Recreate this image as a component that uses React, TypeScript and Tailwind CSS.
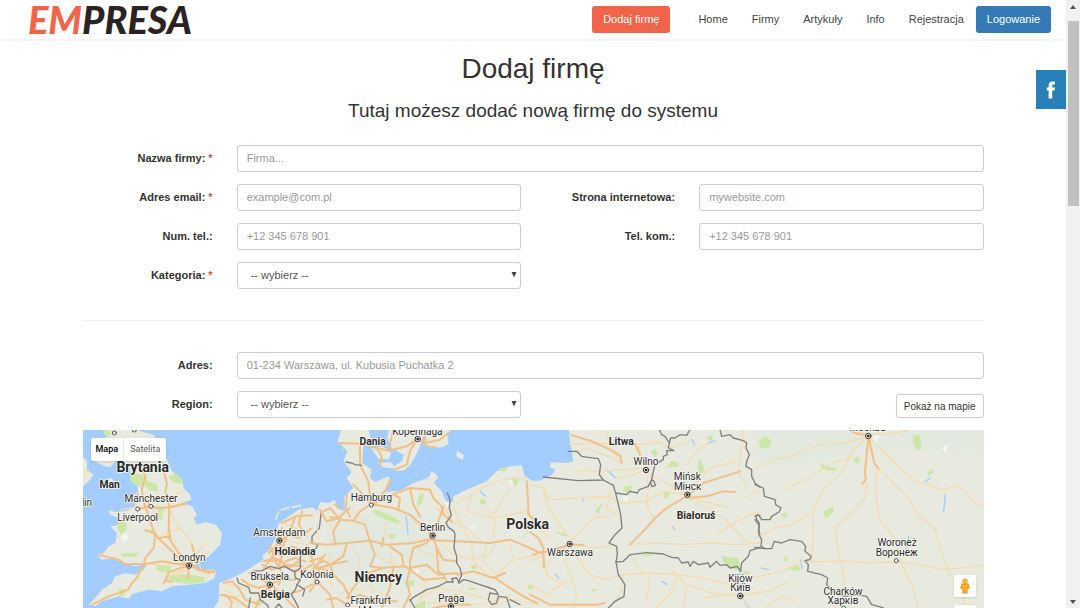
import type { ReactNode } from "react";

const navLinks = ["Home", "Firmy", "Artykuły", "Info", "Rejestracja"];

type Region = {
  shift: string;
  forests: string[];
  minor: string[];
  major: string[];
  borders: string[];
};

const regions: Region[] = [
  // British Isles and the Low Countries
  {
    shift: "translate(0 0)",
    forests: [
      "M145 135L180 140 190 155 225 170 228 190 205 188 185 172 160 172 145 158Z",
      "M258 145L285 137 302 155 300 168 272 162Z",
      "M228 235L243 238 240 275 226 272Z",
      "M108 278L135 285 132 308 118 320 105 300Z",
      "M115 376L168 374 166 385 125 388Z",
      "M108 484L130 482 130 500 112 506Z",
      "M222 410L268 415 262 436 225 428Z",
      "M250 442L320 438 368 448 366 462 320 468 262 458Z",
      "M190 305L212 306 210 312 190 311Z",
      "M62 5L88 8 84 24 66 20Z",
      "M520 517L545 515 545 528 523 530Z",
    ],
    minor: [
      "M0 125L22 130M5 150L20 135",
      "M170 190L155 205 165 240M150 240L115 245",
      "M205 235L225 262 260 235M260 240L290 300 315 322 330 350",
      "M312 320L330 345 340 405M260 290L255 330 290 345",
      "M240 320L300 300M320 410L280 440 300 455M260 400L300 410 350 390 385 370",
      "M190 405L245 412 300 405M240 470L270 440 320 425",
      "M360 430L340 380 375 340",
      "M255 215L300 190",
      "M420 480L450 500 470 530M430 470L480 480 520 500M430 530L465 505",
      "M540 400L600 400M560 370L590 385 620 380M600 400L640 420",
      "M610 290L640 300 680 330M605 330L640 345 680 350",
    ],
    major: [
      "M178 110L190 150 180 180 180 215M240 115L255 165 250 190 262 235 260 300 265 330",
      "M165 243L205 235 225 240 262 238 310 228",
      "M180 205L200 265 215 310 228 330 265 325",
      "M190 306L220 318 215 360 190 390 185 410",
      "M228 330L260 360 285 385 318 410",
      "M50 380L110 395 130 408 190 408 240 400 270 405 318 412",
      "M260 330L290 375 320 395 345 425 395 432",
      "M318 412L262 432 245 465M318 412L320 450M270 462L250 458",
      "M185 408L165 450 150 465 138 485M140 485L80 505 30 530",
      "M330 350L335 370 340 395 318 412M318 412L380 435 398 428",
      "M270 238L300 228M205 235L200 225",
      "M425 465L450 460 470 480 490 515 530 530M445 540L450 520 430 500",
      "M415 500L460 510 500 540M480 455L500 470 530 480 560 470",
      "M545 400L575 390 600 400 620 420M560 375L585 350 590 340M592 338L600 380 590 420",
      "M592 340L620 320 650 330 690 300M600 300L595 330M600 285L640 265 690 262",
      "M640 265L620 320M660 250L650 290 670 320M600 375L650 370 690 385",
      "M540 410L570 425 610 410 660 415M500 435L540 440 565 468 600 455 640 455",
      "M565 468L540 500 520 540M565 468L600 500 640 540M600 500L650 490 690 470",
      "M560 350L575 375 565 400M580 400L605 440 590 470M620 420L650 400",
      "M570 385L600 365 630 355 660 365M610 400L640 390 670 400M630 430L665 425 690 410",
      "M580 365L605 350 615 325M545 420L560 400 590 395 605 405M525 450L550 460 565 490",
    ],
    borders: [
      "M465 450L470 465 500 478 505 495 530 495 535 515 555 530",
      "M510 430L540 428 565 415 590 422 608 415 625 425 638 430 640 450 655 455 645 470 640 485 628 500 640 520 650 540",
      "M718 250L712 300 690 325 690 345 708 350 702 362 675 372 655 385 655 420 640 430M645 470L668 485 662 505",
      "M505 510L500 540M555 530L560 540M580 540L590 528 600 540",
    ],
  },
  // Denmark and Germany
  {
    shift: "translate(684 0)",
    forests: [
      "M185 248L205 247 250 268 270 280 265 288 230 275 200 262Z",
      "M232 320L255 318 255 332 240 333Z",
      "M332 195L342 200 335 228 320 235 325 210Z",
      "M510 212L528 216 525 230 510 226Z",
      "M605 148L622 150 625 168 612 175Z",
      "M565 122L590 118 590 128 568 130Z",
      "M282 460L310 455 312 472 290 478Z",
      "M650 470L668 472 668 485 655 482Z",
      "M480 410L500 412 500 422 488 424Z",
      "M315 530L345 515 345 540 318 540Z",
      "M475 478L500 480 496 486 478 486Z",
      "M95 50L105 58 100 70Z",
    ],
    minor: [
      "M440 225L485 200 520 175 575 155 650 150M430 240L460 300 485 345 490 400 540 450",
      "M485 200L470 250 555 270 550 335M555 270L650 250 690 290",
      "M650 240L670 280 640 330M520 240L550 260 600 180",
      "M420 280L470 300 520 345M405 240L430 285M440 380L480 395 540 380 560 340",
      "M560 440L600 400 680 380M610 400L600 350M530 345L520 400 560 440",
      "M320 520L380 480 450 490 520 510M350 525L520 530 600 500M460 470L440 520",
      "M200 380L230 400 260 410M260 240L300 260 330 300M230 280L220 340",
      "M130 360L150 400 140 430M60 380L50 430 70 480M200 430L180 480 220 500",
      "M380 240L400 260 430 250M540 540L600 515 690 530",
      "M320 350L340 375 380 385M240 380L250 420M400 350L430 380",
      "M130 250L160 280M60 280L70 320M20 290L25 330M90 500L120 480 160 490",
      "M340 450L350 480 330 510M150 440L200 450 240 430",
    ],
    major: [
      "M90 45L160 48 200 60 235 68 290 55 320 35M150 50L150 110 175 160 183 228",
      "M235 68L250 5M320 35L345 45 390 35 415 15M320 35L300 70 290 110 255 125M340 5L350 55 375 58",
      "M200 60L215 85 210 110",
      "M130 170L150 190 183 228M240 155L225 190 183 228M183 230L230 208 260 195 300 180 360 185 370 210 395 235 400 260",
      "M183 228L150 250 130 278 90 275 60 240 40 250M183 228L250 240 300 260 345 300 368 322",
      "M300 180L310 230 330 265M250 200L270 210 265 245",
      "M130 278L165 290 175 325 180 340M90 275L70 310 75 345M30 245L50 280 90 270M120 240L85 270 60 268",
      "M400 235L385 280 370 320M400 260L425 280M368 322L350 345 310 360 300 400 300 420",
      "M0 345L50 350 110 345 180 338 230 350 310 345 350 335 440 340 540 345 600 335 660 360 690 375",
      "M370 325L380 360 400 395 440 400M380 360L385 430 400 440M180 340L195 380 180 415 215 420 285 415 300 425",
      "M110 350L100 385 60 410 25 420M0 400L30 390 60 410 110 400M60 410L70 440 100 470 120 510",
      "M300 420L350 410 385 440 440 435M300 425L290 460 300 500 280 540M300 425L340 455 400 450",
      "M440 440L490 430 550 450 585 435M555 450L600 480 640 505 680 525",
      "M0 430L20 460 60 500 70 540M20 460L0 490M60 445L30 440 20 410 40 400M110 510L130 480 160 440 220 420",
      "M110 530L80 510 50 515M115 510L150 500 200 520 260 520M250 420L240 480 215 540M400 440L410 460",
      "M650 160L655 230 655 260 690 290M420 510L440 500 425 530 370 540M425 530L480 530",
      "M215 355L220 330M240 355L275 380 280 410M10 420L50 425M25 405L45 380M15 415L5 390",
      "M110 200L108 240 120 265M90 240L75 230",
    ],
    borders: [
      "M108 102L125 105 135 110 155 112",
      "M412 195L420 215 418 240 424 262 408 285 415 298 432 310 435 320 432 360 440 385 440 405 450 420 455 440 445 465",
      "M300 518L310 508 350 485 385 475 410 462 430 462 425 452 440 450 448 465 460 455 475 458 510 470 540 480 555 485 565 500 540 495 535 515 545 530 560 525 565 505 590 508 600 540",
      "M300 515L315 540M600 515L630 530",
    ],
  },
  // Poland, Lithuania and Belarus
  {
    shift: "translate(1344 0)",
    forests: [
      "M362 70L375 62 385 75 375 88Z",
      "M425 98L445 105 445 116 408 118Z",
      "M508 90L520 115 522 130 510 145 503 120Z",
      "M280 178L305 172 305 195 283 190Z",
      "M400 190L424 190 412 212 402 210Z",
      "M200 240L225 222 208 245 212 258 196 252Z",
      "M575 385L625 390 635 430 600 420 578 400Z",
      "M640 428L658 432 655 442 638 438Z",
      "M330 380L365 376 368 384 335 384Z",
      "M75 312L95 314 120 325 100 325Z",
      "M525 30L540 25 550 15 545 40Z",
      "M180 482L205 485 190 492Z",
    ],
    minor: [
      "M120 50L200 45 290 50 390 45M130 75L170 60 270 100M230 10L240 60 270 75",
      "M130 128L210 130 345 120M345 125L300 145 260 150M325 55L335 90 345 125 370 145 430 175 470 200",
      "M0 170L40 180 60 215 150 210 230 205 270 225M40 180L55 240 110 320M240 190L230 240 270 270",
      "M118 345L150 310 190 270 240 265M118 350L80 380 50 410 30 420M118 350L150 400 180 440 230 455 280 440",
      "M118 350L105 400 125 450 140 500 130 540M120 350L200 360 255 350M50 410L50 440 100 470",
      "M280 440L360 435 440 440 520 450 600 470M300 350L380 345 460 350 540 345 620 350 690 345",
      "M350 130L355 180 350 230 380 290M270 225L345 220 400 190 470 200M470 205L520 235 580 270 640 330",
      "M470 200L520 220 600 240M440 440L430 490 380 540M360 440L350 520M300 380L340 440",
      "M470 195L540 120 620 100M470 110L500 70 540 40M640 330L660 345M640 5L630 90 625 130 650 180",
      "M430 430L470 470 560 500 630 500M470 470L460 540M280 440L270 500 240 540M0 470L50 500 110 460",
      "M520 510L600 500 630 505 690 490M630 505L660 540M60 330L0 280M0 400L40 380",
      "M690 250L620 280 560 320M640 210L690 190M370 35L420 60 480 40",
    ],
    major: [
      "M125 22L180 38 240 65 272 85 275 105M315 48L330 80",
      "M300 350L345 305 375 270 410 240 470 205 520 165 630 130M470 210L530 205 580 190 615 192",
      "M0 312L25 330 40 360 42 420M35 375L70 365 118 350M40 370L10 380M0 500L30 515 60 530 200 530 225 525",
      "M130 350L160 350",
    ],
    borders: [
      "M40 147L145 158 220 156 250 172M115 70L140 70 155 85 175 88 205 92 212 110 208 140 220 156",
      "M250 172L258 200 272 260 276 300 255 320 237 345 260 355 262 380 258 402",
      "M258 195L290 200 300 190 322 195 328 185 355 175 365 155 372 160 376 172 366 176 362 165 375 110 400 95 400 85 412 80 410 68 432 68 415 60 418 45 405 25 395 20 388 5",
      "M418 45L422 30 435 30 450 20 470 22 480 5",
      "M570 5L575 25 600 20 610 30 640 38 650 45 648 60 658 80 650 100 648 115 665 125 665 145 675 165 690 178",
      "M258 402L280 400 300 380 350 374 400 378 425 388 445 390 455 405 475 402 480 415 490 400 505 410 535 405 540 418 560 400 570 412 590 410 600 420 622 415 632 430 635 405 655 385 660 368 690 358",
      "M258 402L265 440 285 470 282 505 255 520 235 540M690 262L678 262 680 275 688 285 685 310 690 318",
    ],
  },
  // Western Russia and eastern Ukraine
  {
    shift: "translate(2019 -120)",
    forests: [
      "M10 160L30 143 50 158 42 182 15 178Z",
      "M475 142L495 142 500 180 485 188 475 165Z",
      "M195 222L210 235 245 240 240 250 200 242Z",
      "M295 210L314 208 312 226 298 224Z",
      "M205 372L235 355 235 370 220 388 208 388Z",
      "M78 378L94 374 96 388 82 388Z",
      "M518 255L530 242 536 255 520 265Z",
      "M85 512L98 500 95 520 86 520Z",
      "M95 543L130 532 138 550 115 545Z",
    ],
    minor: [
      "M340 145L270 165 195 170 120 200 60 215 0 242M340 148L290 190 265 250 200 310 175 370 172 520",
      "M340 145L380 185 430 235 480 280 520 290 560 305 610 292 640 320 660 345 690 358",
      "M368 240L410 280 460 330 490 380 540 425 560 490 580 550 610 600 640 660",
      "M368 240L360 300 375 400 420 450 440 530 470 590 490 660M335 290L330 330 295 370 240 420 250 490 258 520",
      "M165 522L258 518 340 525 425 522 490 530 560 545 690 532M258 520L270 590 240 660",
      "M80 312L160 270 230 225 290 210M0 450L60 420 110 410 165 375M0 568L80 550 160 512",
      "M340 140L400 138 470 126M340 142L300 130 280 126M0 620L50 605 100 580M30 660L80 625 120 640",
    ],
    major: [
      "M340 155L335 200 330 250 332 275 322 288M343 155L350 190 358 225 370 242M335 140L310 138 285 128",
    ],
    borders: [
      "M0 290L25 300 28 325 60 335 62 350 78 360 72 372 50 385 45 395 20 395 10 380 0 385",
      "M0 395L12 412 12 440 20 455 18 475 30 482 50 482 58 460 80 465 105 455 140 460 152 475 150 490 168 505 165 515 150 518 160 530 158 550 200 560 218 570 215 590 225 600 235 615 270 625 300 620 335 625 350 650 370 655 385 660",
      "M0 478L30 482",
    ],
  },
];

const continent =
  "M390 546L410 520 412 465 450 450 490 430 520 410 545 395 540 385 562 365 570 350 585 320 588 290 605 275 650 245 690 238 706 248 714 222 740 225 759 215 764 240 789 250 787 205 814 180 794 150 809 132 784 100 796 70 767 40 779 0 859 0 866 30 844 55 841 105 869 125 864 150 880 162 919 145 926 160 909 192 954 188 994 165 1029 152 1054 162 1079 190 1092 222 1112 222 1114 205 1154 185 1214 160 1244 130 1284 115 1319 112 1326 140 1349 158 1374 158 1410 140 1420 125 1404 118 1406 103 1454 105 1474 100 1466 55 1460 0 2730 0 2730 1400 390 1400Z";

const britain =
  "M60 0L75 25 45 45 50 75 30 95 60 112 85 118 100 100 140 110 150 150 165 168 180 185 185 200 150 205 160 235 135 248 100 252 80 245 85 260 110 270 115 290 85 295 105 315 100 345 80 355 65 375 45 380 60 395 90 390 110 400 160 415 195 408 185 425 160 440 130 435 100 445 90 465 60 485 40 510 20 530 40 534 60 520 110 505 140 512 150 498 200 485 240 490 270 475 320 470 370 465 398 450 402 425 345 425 330 415 360 400 385 380 415 350 420 315 402 290 370 282 345 290 335 272 345 260 330 235 300 225 328 215 325 200 305 180 300 155 270 130 255 95 235 60 215 20 170 8 190 0Z";

const islands = [
  "M0 85L15 100 15 125 35 140 20 160 0 178Z",
  "M72 158L88 150 95 158 80 168Z",
  "M922 0L916 30 930 62 965 80 960 100 942 110 935 128 965 128 985 110 1000 85 1012 60 1020 35 1035 0Z",
  "M868 62L900 55 928 72 920 95 890 92Z",
  "M885 105L925 102 945 122 905 118Z",
  "M1032 0L1026 40 1042 60 1080 58 1100 48 1096 25 1108 0Z",
  "M1124 68L1146 82 1142 97 1124 86Z",
  "M1048 130L1062 138 1068 150 1054 166 1046 158 1030 150 1042 146Z",
];

const lakes =
  "M280 0L284 14M972 265L978 318M1195 190L1210 205M1200 130L1216 138M1500 208L1504 220M1740 460L1755 470M1770 295L1778 305M1976 420L1970 460 1976 505 2000 540M1880 45L1900 38M1830 35L1838 50M2590 200L2585 250M2530 160L2545 150M2480 325L2470 370M2155 395L2160 420M2038 420L2060 425M1420 440L1430 450M1575 125L1600 150";

const highlands = [
  "M125 310L140 325 130 345 118 330Z",
  "M165 170L185 195 172 205Z",
  "M830 445L870 430 862 450Z",
  "M990 420L1012 425 1005 445Z",
  "M1085 215L1102 225 1098 240Z",
  "M1160 300L1180 290 1175 306Z",
  "M1280 150L1296 165 1285 172Z",
  "M2370 25L2395 20 2380 45Z",
  "M2580 60L2600 45 2590 75Z",
  "M1440 330L1470 350 1460 362Z",
  "M1620 210L1640 200 1634 222Z",
];

type Place = { name: string; x: number; y: number; size?: "city" | "area" | "country" };

const places: Place[] = [
  { name: "Brytania", x: 182, y: 131, size: "country" },
  { name: "Man", x: 83, y: 181, size: "area" },
  { name: "Manchester", x: 207, y: 223 },
  { name: "Liverpool", x: 167, y: 278 },
  { name: "Londyn", x: 322, y: 399 },
  { name: "Dublin", x: -12, y: 235 },
  { name: "Amsterdam", x: 592, y: 323 },
  { name: "Holandia", x: 639, y: 380, size: "area" },
  { name: "Bruksela", x: 563, y: 456 },
  { name: "Belgia", x: 580, y: 511, size: "area" },
  { name: "Kolonia", x: 705, y: 449 },
  { name: "Dania", x: 872, y: 50, size: "area" },
  { name: "Kopenhaga", x: 1006, y: 20 },
  { name: "Hamburg", x: 868, y: 219 },
  { name: "Berlin", x: 1052, y: 309 },
  { name: "Niemcy", x: 889, y: 463, size: "country" },
  { name: "Frankfurt", x: 866, y: 527 },
  { name: "nad Menem", x: 865, y: 557 },
  { name: "Praga", x: 1108, y: 521 },
  { name: "Polska", x: 1337, y: 304, size: "country" },
  { name: "Warszawa", x: 1464, y: 385 },
  { name: "Litwa", x: 1618, y: 52, size: "area" },
  { name: "Wilno", x: 1692, y: 111 },
  { name: "Mińsk", x: 1816, y: 157 },
  { name: "Мінск", x: 1817, y: 186 },
  { name: "Białoruś", x: 1842, y: 274, size: "area" },
  { name: "Kijów", x: 1975, y: 461 },
  { name: "Київ", x: 1975, y: 490 },
  { name: "Москва", x: 2357, y: 9 },
  { name: "Woroneż", x: 2445, y: 355 },
  { name: "Воронеж", x: 2444, y: 383 },
  { name: "Charków", x: 2283, y: 500 },
  { name: "Харків", x: 2283, y: 529 },
];

const placeStyles = {
  city: "text-[30px] font-normal",
  area: "text-[31px] font-bold",
  country: "text-[42px] font-bold",
};

const capitals = [
  [321, 413], [592, 338], [564, 470], [1007, 33], [1052, 323], [1107, 535],
  [1463, 348], [1692, 126], [1816, 200], [1975, 504], [2359, 24],
];

const towns = [
  [97, 15], [157, 6], [167, 243], [207, 235], [705, 462], [868, 231], [797, 531], [2443, 398], [2285, 540],
];

function EuropeMap() {
  return (
    <svg
      className="absolute inset-0 size-full"
      viewBox="0 0 2703 534"
      preserveAspectRatio="xMidYMin slice"
      role="img"
      aria-label="Mapa Europy"
    >
      <g transform="translate(-3 -6)" strokeLinejoin="round" strokeLinecap="round">
        <g fill="#e8eadf">
          <path d={continent} />
          <path d={britain} />
          {islands.map((d) => (
            <path key={d} d={d} />
          ))}
        </g>
        <path d="M582 272L590 252M598 245L620 238M632 238L655 232" stroke="#e8eadf" strokeWidth="5" fill="none" />
        <path d="M730 290L880 250 1060 260 1095 400 900 500 730 420ZM2019 10L2700 10 2700 80 2400 60 2100 120 2019 100Z" fill="#e3e9df" />
        {highlands.map((d) => (
          <path key={d} d={d} fill="#f5f4ef" />
        ))}
        <path d={lakes} stroke="#a3ccff" strokeWidth="4" fill="none" />
        {regions.map((region) => (
          <g key={region.shift} transform={region.shift} fill="none">
            {region.forests.map((d) => (
              <path key={d} d={d} fill="#cce6a8" />
            ))}
            {region.minor.map((d) => (
              <path key={d} d={d} stroke="#f3dcb0" strokeWidth="4" />
            ))}
            {region.major.map((d) => (
              <path key={d} d={d} stroke="#f0c088" strokeWidth="6" />
            ))}
            {region.borders.map((d) => (
              <path key={d} d={d} stroke="#808080" strokeWidth="4" />
            ))}
          </g>
        ))}
        {capitals.map(([x, y]) => (
          <g key={`${x}-${y}`}>
            <circle cx={x} cy={y} r="8" fill="#eeeeee" stroke="#333333" strokeWidth="3" />
            <circle cx={x} cy={y} r="4" fill="#222222" />
          </g>
        ))}
        {towns.map(([x, y]) => (
          <circle key={`${x}-${y}`} cx={x} cy={y} r="6" fill="#f7f7f7" stroke="#555555" strokeWidth="3" />
        ))}
        {places.map((place) => (
          <text
            key={place.name}
            x={place.x}
            y={place.y}
            textAnchor="middle"
            fill="#2b2b2b"
            stroke="#f7f7f2"
            strokeWidth="5"
            paintOrder="stroke"
            className={placeStyles[place.size ?? "city"]}
          >
            {place.name}
          </text>
        ))}
      </g>
    </svg>
  );
}

function Pegman() {
  return (
    <svg viewBox="0 0 12 18" className="h-[17px] w-3" aria-hidden="true">
      <ellipse cx="6" cy="16" rx="4" ry="1.5" fill="#dddddd" />
      <path d="M2.5 6h7l1.2 5-1.5.5-.5-2-.3 6H6.4L6 12l-.4 3.500H3.600l-.3-6-.5 2-1.500-.5z" fill="#f9b125" stroke="#d98d12" strokeWidth=".6" />
      <circle cx="6" cy="3.300" r="2.500" fill="#fbc02d" stroke="#d98d12" strokeWidth=".6" />
      <path d="M4.200 6.200L6 8l1.800-1.800z" fill="#d98d12" />
    </svg>
  );
}

type LabelProps = { htmlFor: string; required?: boolean; children: ReactNode };

function FieldLabel({ htmlFor, required, children }: LabelProps) {
  return (
    <label htmlFor={htmlFor} className="col-span-2 px-3 text-right font-bold leading-[27px]">
      {children}
      {required && <span className="font-normal text-red-600"> *</span>}
    </label>
  );
}

type FieldProps = { id: string; label: string; placeholder: string; required?: boolean; wide?: boolean; type?: string };

function TextField({ id, label, placeholder, required, wide, type = "text" }: FieldProps) {
  return (
    <>
      <FieldLabel htmlFor={id} required={required}>{label}</FieldLabel>
      <div className={wide ? "col-span-10 px-3" : "col-span-4 px-3"}>
        <input
          id={id}
          type={type}
          placeholder={placeholder}
          className="block h-[27px] w-full rounded-[3px] border border-[#cccccc] bg-white px-[9px] pb-[2px] text-[#555555] placeholder:text-[#999999]"
        />
      </div>
    </>
  );
}

function SelectField({ id, label, required }: { id: string; label: string; required?: boolean }) {
  return (
    <>
      <FieldLabel htmlFor={id} required={required}>{label}</FieldLabel>
      <div className="relative col-span-4 px-3">
        <select
          id={id}
          className="block h-[27px] w-full appearance-none rounded-[3px] border border-[#cccccc] bg-white px-[13px] text-[#555555]"
        >
          <option>-- wybierz --</option>
        </select>
        <svg viewBox="0 0 6 6" className="pointer-events-none absolute right-4 top-[10px] size-[6px]" aria-hidden="true">
          <path d="M0.500 0h5L3 5.500z" fill="#444444" />
        </svg>
      </div>
    </>
  );
}

function Header() {
  return (
    <header className="flex h-[41px] shrink-0 items-start justify-between border-b-2 border-[#f3f3f3] pl-7 pr-[15px]">
      <a href="#" className="flex font-['Lato',sans-serif] text-[38px] font-black italic leading-[39px] text-[#2b2224]">
        <span className="text-[#f0654a]">EM</span>
        <span>PRESA</span>
      </a>
      <nav className="flex items-center pt-[6px]">
        <a href="#" className="mr-4 rounded-[3px] bg-[#f0654a] px-[11px] leading-[27px] text-white">Dodaj firmę</a>
        {navLinks.map((link) => (
          <a key={link} href="#" className="px-3 leading-[27px] text-[#444444]">{link}</a>
        ))}
        <a href="#" className="rounded-[3px] bg-[#337ab7] px-[11px] leading-[27px] text-white">Logowanie</a>
      </nav>
    </header>
  );
}

export default function App() {
  return (
    <div className="flex h-screen overflow-hidden bg-white font-['Liberation_Sans',Arial,sans-serif] text-[11px] text-[#333333]">
      <div className="relative flex min-w-0 flex-1 flex-col">
        <Header />

        <main className="mx-auto flex min-h-0 w-full max-w-[925px] flex-1 flex-col">
          <h1 className="mt-3 text-center text-[28px] leading-8">Dodaj firmę</h1>
          <h2 className="mt-4 text-center text-[19px] leading-5">Tutaj możesz dodać nową firmę do systemu</h2>

          <form className="mt-6 flex min-h-0 flex-1 flex-col">
            <div className="grid grid-cols-12 gap-y-3">
              <TextField id="name" label="Nazwa firmy:" placeholder="Firma..." required wide />
              <TextField id="email" label="Adres email:" placeholder="example@com.pl" type="email" required />
              <TextField id="website" label="Strona internetowa:" placeholder="mywebsite.com" />
              <TextField id="phone" label="Num. tel.:" placeholder="+12 345 678 901" type="tel" />
              <TextField id="mobile" label="Tel. kom.:" placeholder="+12 345 678 901" type="tel" />
              <SelectField id="category" label="Kategoria:" required />
            </div>

            <hr className="mx-3 my-[31px] border-[#eeeeee]" />

            <div className="grid grid-cols-12 gap-y-3">
              <TextField id="address" label="Adres:" placeholder="01-234 Warszawa, ul. Kubusia Puchatka 2" wide />
              <SelectField id="region" label="Region:" />
              <div className="col-span-6 flex justify-end px-3">
                <button type="button" className="mt-[3px] h-6 rounded-[3px] border border-[#cccccc] bg-white px-[7px] text-[10px]">
                  Pokaż na mapie
                </button>
              </div>
            </div>

            <div className="relative mx-3 mt-3 min-h-0 flex-1 overflow-hidden bg-[#a3ccff] font-['Roboto',sans-serif]">
              <EuropeMap />
              <div className="absolute left-2 top-2 flex h-[23px] rounded-[2px] bg-white text-[9px] shadow">
                <button type="button" className="border-r border-[#e6e6e6] px-[5px] font-medium text-black">Mapa</button>
                <button type="button" className="px-[6px] text-[#565656]">Satelita</button>
              </div>
              <div className="absolute right-2 top-[145px] flex flex-col gap-2">
                <button type="button" aria-label="Street View" className="flex size-[22px] items-center justify-center rounded-[2px] bg-white shadow">
                  <Pegman />
                </button>
                <button type="button" aria-label="Powiększ" className="size-[22px] rounded-[2px] bg-white shadow" />
              </div>
            </div>
          </form>
        </main>

        <a
          href="#"
          aria-label="Facebook"
          className="absolute right-0 top-[70px] flex h-[39px] w-[30px] items-center justify-center bg-[#2980b9]"
        >
          <svg viewBox="0 0 10 18" className="h-[18px] w-[10px]" aria-hidden="true">
            <path d="M9 3.500H7.500C6.500 3.500 6.200 4 6.200 4.800V6.500H9L8.600 9.500H6.200V17.500H2.600V9.500H.8V6.500H2.600V4.500C2.600 2 4 .5 6.500.5 7.700.5 8.700.6 9 .7Z" fill="#ffffff" />
          </svg>
        </a>
      </div>

      <div className="flex w-[14px] shrink-0 flex-col items-center justify-between bg-[#f1f1f1] py-1" aria-hidden="true">
        <svg viewBox="0 0 6 4" className="mt-px h-1 w-[6px]">
          <path d="M0 4L3 0l3 4z" fill="#505050" />
        </svg>
        <div className="mb-auto mt-3 h-[185px] w-[11px] bg-[#c1c1c1]" />
        <svg viewBox="0 0 6 4" className="h-1 w-[6px]">
          <path d="M0 0l3 4 3-4z" fill="#505050" />
        </svg>
      </div>
    </div>
  );
}
